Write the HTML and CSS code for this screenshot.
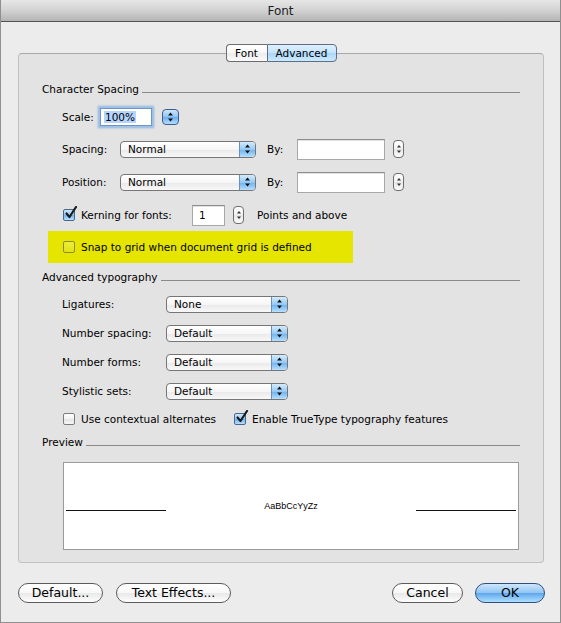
FILE: index.html
```html
<!DOCTYPE html>
<html>
<head>
<meta charset="utf-8">
<title>Font</title>
<link rel="stylesheet" href="styles.css">
</head>
<body>
<div class="window">
  <div class="titlebar">Font</div>
  <div class="content">
    <div class="tabs">
      <span class="tab tab-font">Font</span><span class="tab tab-adv">Advanced</span>
    </div>
    <div class="panel">
      <div class="sec"><span>Character Spacing</span><i class="rule"></i></div>

      <div class="row row-scale">
        <span class="lbl lbl-scale">Scale:</span>
        <span class="field field-scale"><span class="sel-text">100%</span></span>
        <span class="stepper-blue">
          <svg width="7" height="10" viewBox="0 0 7 10"><polygon points="3.5,0.5 6,3.5 1,3.5" fill="#111"/><polygon points="3.5,9.5 6,6.5 1,6.5" fill="#111"/></svg>
        </span>
      </div>

      <div class="row row-sp">
        <span class="lbl lbl-sp">Spacing:</span>
        <span class="popup popup-sp"><span class="ptxt">Normal</span><span class="arr"><svg width="7" height="10" viewBox="0 0 7 10"><polygon points="3.5,0.5 6,3.5 1,3.5" fill="#111"/><polygon points="3.5,9.5 6,6.5 1,6.5" fill="#111"/></svg></span></span>
        <span class="lbl lbl-by">By:</span>
        <span class="field field-by"></span>
        <span class="stepper"><svg width="6" height="10" viewBox="0 0 6 10"><polygon points="3,1 5,3.5 1,3.5" fill="#333"/><polygon points="3,9 5,6.5 1,6.5" fill="#333"/></svg></span>
      </div>

      <div class="row row-pos">
        <span class="lbl lbl-sp">Position:</span>
        <span class="popup popup-sp"><span class="ptxt">Normal</span><span class="arr"><svg width="7" height="10" viewBox="0 0 7 10"><polygon points="3.5,0.5 6,3.5 1,3.5" fill="#111"/><polygon points="3.5,9.5 6,6.5 1,6.5" fill="#111"/></svg></span></span>
        <span class="lbl lbl-by">By:</span>
        <span class="field field-by"></span>
        <span class="stepper"><svg width="6" height="10" viewBox="0 0 6 10"><polygon points="3,1 5,3.5 1,3.5" fill="#333"/><polygon points="3,9 5,6.5 1,6.5" fill="#333"/></svg></span>
      </div>

      <div class="row row-kern">
        <span class="cb checked"><svg class="check" width="14" height="14" viewBox="0 0 14 14"><path d="M2.5 7.5 L5.5 11 L12 1" fill="none" stroke="#1b1b1b" stroke-width="2.2" stroke-linecap="round" stroke-linejoin="round"/></svg></span>
        <span class="cbl lbl-kern">Kerning for fonts:</span>
        <span class="field field-kern">1</span>
        <span class="stepper stepper-kern"><svg width="6" height="10" viewBox="0 0 6 10"><polygon points="3,1 5,3.5 1,3.5" fill="#333"/><polygon points="3,9 5,6.5 1,6.5" fill="#333"/></svg></span>
        <span class="lbl lbl-pts">Points and above</span>
      </div>

      <div class="highlight">
        <span class="cb cb-yellow"></span>
        <span class="cbl">Snap to grid when document grid is defined</span>
      </div>

      <div class="sec sec2"><span>Advanced typography</span><i class="rule"></i></div>

      <div class="row row-adv row-lig">
        <span class="lbl lbl-adv">Ligatures:</span>
        <span class="popup popup-adv"><span class="ptxt">None</span><span class="arr"><svg width="7" height="10" viewBox="0 0 7 10"><polygon points="3.5,0.5 6,3.5 1,3.5" fill="#111"/><polygon points="3.5,9.5 6,6.5 1,6.5" fill="#111"/></svg></span></span>
      </div>
      <div class="row row-adv">
        <span class="lbl lbl-adv">Number spacing:</span>
        <span class="popup popup-adv"><span class="ptxt">Default</span><span class="arr"><svg width="7" height="10" viewBox="0 0 7 10"><polygon points="3.5,0.5 6,3.5 1,3.5" fill="#111"/><polygon points="3.5,9.5 6,6.5 1,6.5" fill="#111"/></svg></span></span>
      </div>
      <div class="row row-adv">
        <span class="lbl lbl-adv">Number forms:</span>
        <span class="popup popup-adv"><span class="ptxt">Default</span><span class="arr"><svg width="7" height="10" viewBox="0 0 7 10"><polygon points="3.5,0.5 6,3.5 1,3.5" fill="#111"/><polygon points="3.5,9.5 6,6.5 1,6.5" fill="#111"/></svg></span></span>
      </div>
      <div class="row row-adv">
        <span class="lbl lbl-adv">Stylistic sets:</span>
        <span class="popup popup-adv"><span class="ptxt">Default</span><span class="arr"><svg width="7" height="10" viewBox="0 0 7 10"><polygon points="3.5,0.5 6,3.5 1,3.5" fill="#111"/><polygon points="3.5,9.5 6,6.5 1,6.5" fill="#111"/></svg></span></span>
      </div>

      <div class="row row-checks">
        <span class="cb"></span>
        <span class="cbl lbl-ctx">Use contextual alternates</span>
        <span class="cb checked"><svg class="check" width="14" height="14" viewBox="0 0 14 14"><path d="M2.5 7.5 L5.5 11 L12 1" fill="none" stroke="#1b1b1b" stroke-width="2.2" stroke-linecap="round" stroke-linejoin="round"/></svg></span>
        <span class="cbl">Enable TrueType typography features</span>
      </div>

      <div class="sec sec3"><span>Preview</span><i class="rule"></i></div>

      <div class="preview">
        <i class="pline"></i>
        <span class="sample">AaBbCcYyZz</span>
        <i class="pline"></i>
      </div>
    </div>

    <div class="buttons">
      <span class="btn btn-default">Default...</span>
      <span class="btn btn-effects">Text Effects...</span>
      <span class="spacer"></span>
      <span class="btn btn-cancel">Cancel</span>
      <span class="btn btn-ok">OK</span>
    </div>
  </div>
</div>
</body>
</html>
```
FILE: styles.css
```css
* { box-sizing: border-box; margin: 0; padding: 0; }
html, body { width: 561px; height: 623px; overflow: hidden; }
body {
  font-family: "DejaVu Sans", "Liberation Sans", sans-serif;
  font-size: 10.5px;
  color: #000;
  background: #ececec;
}
.window {
  width: 561px;
  height: 623px;
  background: #ececec;
  border: 1px solid #8f8f8f;
  border-top: 0;
  display: flex;
  flex-direction: column;
}
.titlebar {
  height: 22px;
  flex: none;
  background: linear-gradient(#e6e6e6, #d2d2d2 50%, #b4b4b4);
  border-bottom: 1px solid #525252;
  text-align: center;
  font-size: 12px;
  line-height: 22px;
  color: #1c1c1c;
}
.content {
  padding: 0 16px 0 17px;
  display: flex;
  flex-direction: column;
}
.tabs {
  display: flex;
  justify-content: center;
  height: 18px;
  margin-top: 22px;
  margin-bottom: -9px;
  position: relative;
  z-index: 1;
}
.tab {
  height: 18px;
  line-height: 16px;
  text-align: center;
  border: 1px solid #6d6d6d;
  font-size: 10.5px;
}
.tab-font {
  width: 41px;
  border-right: 0;
  border-radius: 4px 0 0 4px;
  background: linear-gradient(#ffffff, #f7f7f7 50%, #ececec 51%, #fafafa);
}
.tab-adv {
  width: 70px;
  border-left: 1px solid #9aaabb;
  border-radius: 0 4px 4px 0;
  background: linear-gradient(#dff0fe, #c3e3fc 50%, #a9d6fb 51%, #cdeafe);
  border-color: #5d6f86;
}
.panel {
  border: 1px solid #c1c1c1;
  border-top-color: #a9a9a9;
  border-radius: 4px;
  background: #e3e3e3;
  padding: 28px 23px 12px 23px;
  display: flex;
  flex-direction: column;
}
.sec {
  display: flex;
  align-items: center;
  height: 14px;
}
.sec .rule {
  flex: 1;
  height: 1px;
  background: #8a8a8a;
  margin: 6px 0 0 3px;
}
.sec2 { margin-top: 7px; }
.sec3 { margin-top: 8px; }

.row {
  display: flex;
  align-items: center;
  height: 22px;
  padding-left: 20px;
}
.row-scale { margin-top: 10px; }
.row-sp { margin-top: 10px; }
.row-pos { margin-top: 11px; }
.row-kern { margin-top: 11px; }
.row-adv { height: 20px; margin-top: 9px; }
.row-lig { margin-top: 10px; }
.row-checks { height: 16px; margin-top: 10px; }

.lbl { flex: none; white-space: nowrap; }
.lbl-scale { width: 38px; }
.lbl-sp { width: 58px; }
.lbl-by { width: 30px; margin-left: 11px; }
.lbl-adv { width: 104px; }
.lbl-pts { margin-left: 13px; }
.lbl-kern { width: 111px; }
.lbl-ctx { width: 153px; }

.field {
  flex: none;
  background: #fff;
  border: 1px solid #a8a8a8;
  border-top-color: #8c8c8c;
  box-shadow: inset 0 1px 0 #e2e2e2;
}
.field-scale {
  width: 52px;
  height: 18px;
  border-color: #6f95c4;
  box-shadow: 0 0 0 1px #9cc0e8, 0 0 2px 2px #8db4e0;
  padding: 1px 0 0 3px;
  line-height: 14px;
}
.sel-text { background: #b5d5ff; padding: 0 1px; }
.field-by { width: 88px; height: 21px; }
.field-kern { width: 33px; height: 21px; padding-left: 6px; line-height: 19px; margin-left: 0; }

.stepper-blue {
  flex: none;
  width: 17px;
  height: 16px;
  margin-left: 10px;
  border: 1px solid #3d5e8c;
  border-radius: 4px;
  background: linear-gradient(#cfe6fc, #8ec3f3 50%, #69acee 51%, #b6defd);
  display: flex;
  align-items: center;
  justify-content: center;
}
.stepper {
  flex: none;
  width: 11px;
  height: 18px;
  margin-left: 8px;
  border: 1px solid #6e6e6e;
  border-radius: 4px;
  background: linear-gradient(#ffffff, #f1f1f1 50%, #e6e6e6 51%, #fbfbfb);
  display: flex;
  align-items: center;
  justify-content: center;
}
.stepper-kern { margin-left: 8px; }

.popup {
  flex: none;
  display: flex;
  align-items: center;
  height: 17px;
  border: 1px solid #767676;
  border-radius: 4px;
  background: linear-gradient(#ffffff, #f6f6f6 50%, #e9e9e9 51%, #f8f8f8);
  overflow: hidden;
}
.popup-sp { width: 136px; }
.popup-adv { width: 122px; }
.ptxt { padding-left: 7px; flex: 1; line-height: 15px; }
.arr {
  width: 16px;
  height: 100%;
  border-left: 1px solid #6f8db5;
  background: linear-gradient(#d4ebfd, #95c9f5 50%, #6cb1ef 51%, #b8e0fd);
  display: flex;
  align-items: center;
  justify-content: center;
}

.cb {
  flex: none;
  position: relative;
  width: 12px;
  height: 12px;
  margin-left: 1px;
  border: 1px solid #7c7c7c;
  border-radius: 2px;
  background: linear-gradient(#ffffff, #f2f2f2 50%, #e4e4e4 51%, #f7f7f7);
}
.cb.checked {
  border-color: #4a6790;
  background: linear-gradient(#cfe6fc, #92c7f4 50%, #6eb1ee 51%, #b8e0fd);
}
.check { position: absolute; left: 0; top: -4px; }
.cbl { margin-left: 6px; white-space: nowrap; flex: none; }
.row-checks .cb + .cbl + .cb { margin-left: 0; }

.highlight {
  display: flex;
  align-items: center;
  margin: 5px 0 0 6px;
  width: 305px;
  height: 32px;
  background: #e5e500;
  padding-left: 14px;
}
.cb-yellow {
  border-color: #8c8c2c;
  background: linear-gradient(#eded3a, #e2e21a);
}

.preview {
  display: flex;
  align-items: center;
  margin: 13px 0 0 21px;
  width: 456px;
  height: 88px;
  background: #fff;
  border: 1px solid #9b9b9b;
  padding: 0 2px;
}
.pline {
  flex: none;
  width: 100px;
  height: 1px;
  background: #111;
  margin-top: 8px;
}
.sample {
  flex: 1;
  text-align: center;
  font-family: "Liberation Sans", sans-serif;
  font-size: 9px;
}

.buttons {
  display: flex;
  align-items: center;
  margin-top: 20px;
  height: 20px;
}
.spacer { flex: 1; }
.btn {
  flex: none;
  height: 20px;
  border: 1px solid #5c5c5c;
  border-radius: 10px;
  background: linear-gradient(#ffffff, #f7f7f7 50%, #e8e8e8 51%, #fdfdfd);
  text-align: center;
  font-size: 12.5px;
  line-height: 18px;
}
.btn-default { width: 85px; }
.btn-effects { width: 115px; margin-left: 13px; }
.btn-cancel { width: 71px; }
.btn-ok {
  width: 70px;
  margin-left: 12px;
  margin-right: -1px;
  border-color: #2f4f7c;
  background: linear-gradient(#cfe6fc, #8fc4f3 50%, #5ea6ec 51%, #aee0ff);
}
```
